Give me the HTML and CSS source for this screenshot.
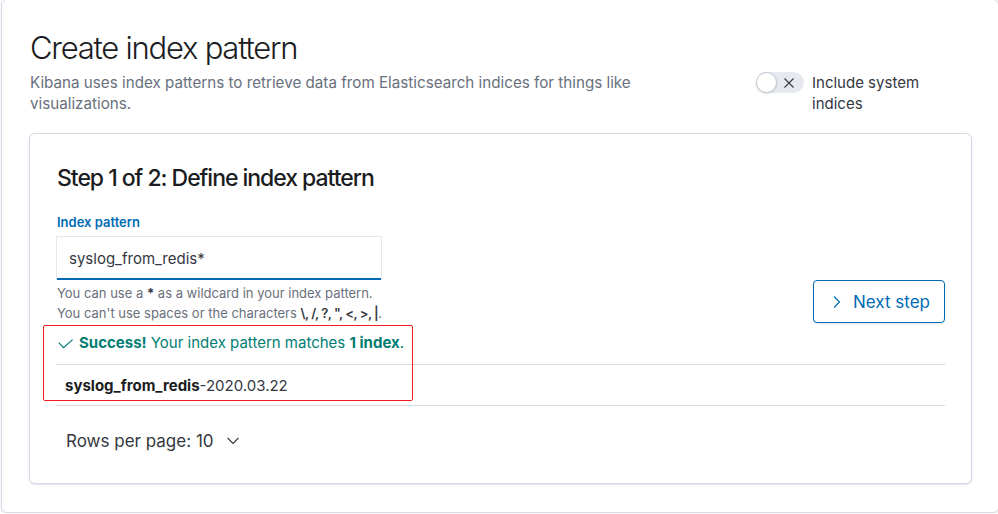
FILE: index.html
```html
<!DOCTYPE html>
<html lang="en">
<head>
<meta charset="utf-8">
<title>Create index pattern</title>
<link rel="stylesheet" href="styles.css">
</head>
<body>
<div class="page">
  <header class="head">
    <div class="head-main">
      <h1 class="title">Create index pattern</h1>
      <p class="subtitle">Kibana uses index patterns to retrieve data from Elasticsearch indices for things like visualizations.</p>
    </div>
    <div class="head-side">
      <span class="switch">
        <span class="knob"></span>
        <svg class="switch-x" width="10" height="10" viewBox="0 0 10 10"><path d="M0.5 0.5 L9.5 9.5 M9.5 0.5 L0.5 9.5" stroke="#343741" stroke-width="1.1" fill="none"/></svg>
      </span>
      <span class="switch-label">Include system indices</span>
    </div>
  </header>

  <section class="card">
    <div class="step">
      <div class="step-main">
        <h2 class="step-title">Step 1 of 2: Define index pattern</h2>
        <label class="field-label" for="pattern">Index pattern</label>
        <input id="pattern" class="field-input" type="text" value="syslog_from_redis*">
        <div class="help">
          <div>You can use a <strong>*</strong> as a wildcard in your index pattern.</div>
          <div>You can't use spaces or the characters <strong class="chars">\, /, ?, ", &lt;, &gt;, |</strong>.</div>
        </div>
      </div>
      <button class="next" type="button">
        <svg width="16" height="16" viewBox="0 0 16 16"><path d="M5 2.5 L10.5 8 L5 13.5" stroke="#006bb4" stroke-width="1.2" fill="none"/></svg>
        <span>Next step</span>
      </button>
    </div>

    <div class="callout">
      <svg class="check" width="16" height="10" viewBox="0 0 16 10"><path d="M0.8 3.6 L5.5 8.6 L14.6 0.6" stroke="#017d73" stroke-width="1.2" fill="none"/></svg>
      <span><strong>Success!</strong> Your index pattern matches <strong>1 index</strong>.</span>
    </div>

    <div class="table">
      <div class="row"><strong>syslog_from_redis</strong>-2020.03.22</div>
    </div>

    <div class="pagination">
      <button class="rows" type="button">
        <span>Rows per page: 10</span>
        <svg width="12" height="8" viewBox="0 0 12 8"><path d="M0.6 1 L6 6.4 L11.4 1" stroke="#343741" stroke-width="1.1" fill="none"/></svg>
      </button>
    </div>

    <div class="annot"></div>
  </section>
</div>
</body>
</html>
```

FILE: styles.css
```css
html, body {
  margin: 0;
  padding: 0;
  background: #ffffff;
  overflow: hidden;
}

body {
  font-family: Inter, "Noto Sans", "Liberation Sans", sans-serif;
  color: #343741;
}

.page {
  box-sizing: border-box;
  width: 998px;
  height: 514px;
  margin: -1px 0 0 1px;
  border: 1px solid #d3dae6;
  border-radius: 6px;
  box-shadow: 0 1px 2px rgba(152, 162, 179, 0.25);
  padding: 28px 26px 0 27px;
  background: #fff;
}

.head {
  display: flex;
  align-items: flex-end;
  justify-content: space-between;
  gap: 24px;
}

.head-main {
  flex: 1;
  min-width: 0;
  max-width: 660px;
}

.title {
  margin: 0;
  font-size: 31px;
  line-height: 40px;
  font-weight: 300;
  color: #1a1c21;
  letter-spacing: -0.04em;
  padding-left: 1px;
}

.subtitle {
  margin: 4px 0 0;
  padding-left: 1px;
  font-size: 15.2px;
  line-height: 21px;
  color: #69707d;
}

.head-side {
  width: 216px;
  flex: none;
  display: flex;
  align-items: flex-start;
  gap: 8px;
}

.switch {
  position: relative;
  flex: none;
  width: 48px;
  height: 21px;
  border-radius: 11px;
  background: #e6eaf0;
  display: flex;
  align-items: center;
  justify-content: flex-end;
  padding-right: 10px;
  box-sizing: border-box;
}

.knob {
  position: absolute;
  left: 0;
  top: 0;
  width: 21px;
  height: 21px;
  box-sizing: border-box;
  border-radius: 50%;
  background: #fff;
  border: 1px solid #c2c9d4;
  box-shadow: 0 1px 2px rgba(0, 0, 0, 0.12);
}

.switch-label {
  font-size: 15px;
  line-height: 21px;
  color: #343741;
}

.card {
  position: relative;
  box-sizing: border-box;
  margin-top: 19px;
  border: 1px solid #d3dae6;
  border-radius: 6px;
  box-shadow: 0 1px 2px rgba(152, 162, 179, 0.3);
  padding: 28px 26px 32px 27px;
  background: #fff;
}

.step {
  display: flex;
  align-items: flex-end;
  justify-content: space-between;
}

.step-title {
  margin: 0 0 18px;
  font-size: 23px;
  line-height: 32px;
  font-weight: 500;
  color: #1a1c21;
  letter-spacing: -0.045em;
}

.field-label {
  display: block;
  font-size: 13px;
  line-height: 20px;
  font-weight: 600;
  color: #006bb4;
  margin-bottom: 4px;
}

.field-input {
  display: block;
  box-sizing: border-box;
  width: 326px;
  height: 44px;
  margin-left: -1px;
  padding: 0 12px;
  border: 1px solid #e3e8ef;
  border-bottom: none;
  box-shadow: inset 0 -2px 0 #006bb4;
  background: #fff;
  font-family: inherit;
  font-size: 15px;
  color: #343741;
  outline: none;
}

.help {
  margin-top: 3px;
  font-size: 13px;
  line-height: 20px;
  color: #69707d;
}

.help strong {
  color: #343741;
  font-weight: 700;
}

.help .chars {
  font-weight: 600;
  letter-spacing: -0.5px;
}

.next {
  box-sizing: border-box;
  width: 132px;
  height: 43px;
  display: inline-flex;
  align-items: center;
  gap: 8px;
  padding: 0 0 0 15px;
  border: 1px solid #006bb4;
  border-radius: 4px;
  background: #fff;
  box-shadow: 0 1px 2px rgba(0, 107, 180, 0.15);
  font-family: inherit;
  font-size: 17px;
  color: #006bb4;
}

.next svg {
  flex: none;
}

.callout {
  display: flex;
  align-items: center;
  gap: 5px;
  margin-top: 8px;
  padding-left: 1px;
  font-size: 15px;
  line-height: 24px;
  color: #017d73;
  margin-bottom: 9px;
}

.callout strong {
  font-weight: 700;
}

.check {
  flex: none;
  margin-top: 1px;
}

.table {
  border-top: 1px solid #d3dae6;
  border-bottom: 1px solid #d3dae6;
  margin-left: -1px;
}

.row {
  height: 40px;
  display: flex;
  align-items: center;
  padding-left: 9px;
  font-size: 15px;
  color: #343741;
}

.row strong {
  font-weight: 700;
  color: #1a1c21;
}

.pagination {
  padding-top: 25px;
}

.rows {
  display: inline-flex;
  align-items: center;
  gap: 13px;
  padding: 0 0 0 9px;
  border: none;
  background: none;
  font-family: inherit;
  font-size: 17px;
  line-height: 20px;
  color: #343741;
}

.annot {
  position: absolute;
  left: 13px;
  top: 191px;
  width: 368px;
  height: 74px;
  border: 1px solid #f01e1e;
  border-radius: 2px;
  pointer-events: none;
}
```
